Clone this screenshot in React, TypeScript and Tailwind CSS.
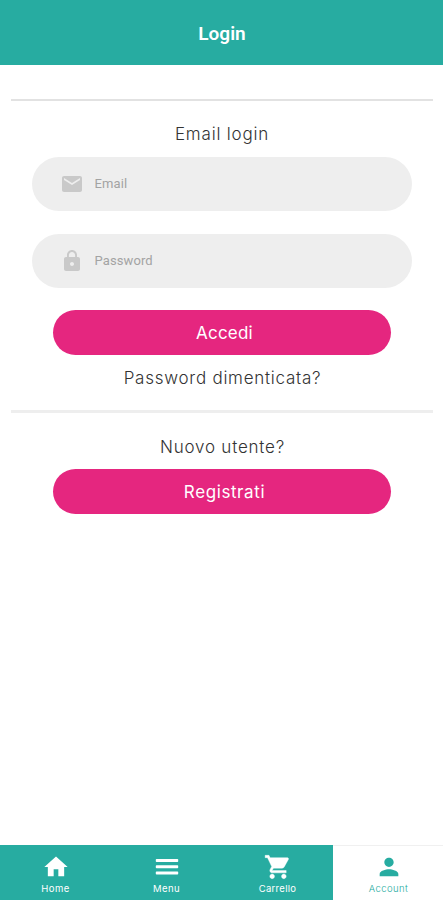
import type { ReactNode } from 'react';
import clsx from 'clsx';
import type { IconType } from 'react-icons';
import { MdEmail, MdHome, MdLock, MdPerson } from 'react-icons/md';

function MenuIcon({ className }: { className?: string }) {
  return (
    <svg viewBox="0 0 28 28" fill="currentColor" className={className}>
      <rect x="2.8" y="6" width="22.4" height="3" rx="0.7" />
      <rect x="2.8" y="12.2" width="22.4" height="3" rx="0.7" />
      <rect x="2.8" y="18.4" width="22.4" height="3" rx="0.7" />
    </svg>
  );
}

function CartIcon({ className }: { className?: string }) {
  return (
    <svg viewBox="0 0 24 24" fill="currentColor" stroke="currentColor" strokeWidth="0.35" className={className}>
      <path d="M7 18c-1.1 0-1.99.9-1.99 2S5.9 22 7 22s2-.9 2-2-.9-2-2-2zM1 2v2h2l3.6 7.59-1.35 2.45c-.16.28-.25.61-.25.96 0 1.1.9 2 2 2h12v-2H7.42c-.14 0-.25-.11-.25-.25l.03-.12.9-1.63h7.45c.75 0 1.41-.41 1.75-1.03l3.58-6.49c.08-.14.12-.31.12-.48 0-.55-.45-1-1-1H5.21l-.94-2H1zm16 16c-1.1 0-1.99.9-1.99 2s.89 2 1.99 2 2-.9 2-2-.9-2-2-2z" />
    </svg>
  );
}

const tabs = [
  { label: 'Home', icon: MdHome, tracking: 'tracking-[0.5px]' },
  { label: 'Menu', icon: MenuIcon, tracking: 'tracking-[0.4px]' },
  { label: 'Carrello', icon: CartIcon, tracking: 'tracking-[0.3px]' },
  { label: 'Account', icon: MdPerson, tracking: 'tracking-[0.4px]', active: true },
];

function Field({ icon: Icon, type, label }: { icon: IconType; type: string; label: string }) {
  return (
    <label className="mx-auto flex h-[54px] w-[380px] items-center rounded-full bg-[#eeeeee] pl-[28px]">
      <Icon className="size-[24px] shrink-0 text-[#c9c9c9]" />
      <input
        type={type}
        placeholder={label}
        className="ml-[11px] w-[280px] bg-transparent font-['Roboto',sans-serif] text-[13px] tracking-[0.1px] outline-none placeholder:text-[#a3a3a3]"
      />
    </label>
  );
}

function PillButton({ children, className }: { children: ReactNode; className?: string }) {
  return (
    <button
      type="button"
      className={clsx(
        'mx-auto flex h-[45px] w-[338px] items-center justify-center rounded-full bg-[#e5267f] pt-[2px] pl-[6px] text-[17px] text-white',
        className,
      )}
    >
      {children}
    </button>
  );
}

export default function App() {
  return (
    <div className="flex h-[900px] w-[443px] flex-col bg-white font-['Inter',sans-serif]">
      <header className="flex h-[65px] items-center justify-center bg-[#27aca1] pt-[4px] pl-px">
        <h1 className="font-['Roboto',sans-serif] text-[19px] font-semibold text-white">Login</h1>
      </header>

      <main className="flex flex-1 flex-col">
        <hr className="mr-[10px] ml-[11px] mt-[34px] h-[2px] border-0 bg-[#e2e2e2]" />
        <h2 className="mt-[21px] h-[24px] pl-px text-center text-[17px] leading-[24px] font-light tracking-[0.8px] text-[#333333]">
          Email login
        </h2>
        <div className="mt-[11px] flex flex-col gap-[23px]">
          <Field icon={MdEmail} type="email" label="Email" />
          <Field icon={MdLock} type="password" label="Password" />
        </div>
        <PillButton className="mt-[22px] tracking-[0.2px]">Accedi</PillButton>
        <a
          href="#"
          className="mt-[11px] h-[24px] pl-[2px] text-center text-[17px] leading-[24px] font-light tracking-[0.75px] text-[#333333]"
        >
          Password dimenticata?
        </a>
        <hr className="mr-[10px] ml-[11px] mt-[20px] h-[3px] border-0 bg-[#eeeeee]" />
        <p className="mt-[22px] h-[24px] pl-[2px] text-center text-[17px] leading-[24px] font-light tracking-[0.8px] text-[#333333]">
          Nuovo utente?
        </p>
        <PillButton className="mt-[10px] tracking-[0.6px]">Registrati</PillButton>
      </main>

      <nav className="grid h-[55px] grid-cols-[111px_111px_111px_110px] bg-[#27aca1]">
        {tabs.map(({ label, icon: Icon, tracking, active }) => (
          <a
            key={label}
            href="#"
            className={clsx(
              'flex flex-col items-center',
              active ? 'border-t border-[#f0f0f0] bg-white pt-[7px] pl-px text-[#27aca1]' : 'pt-[8px] text-white',
            )}
          >
            <Icon className="size-[28px]" />
            <span className={clsx('mt-px text-[9.5px] leading-[14px]', tracking, active && 'font-light')}>
              {label}
            </span>
          </a>
        ))}
      </nav>
    </div>
  );
}
